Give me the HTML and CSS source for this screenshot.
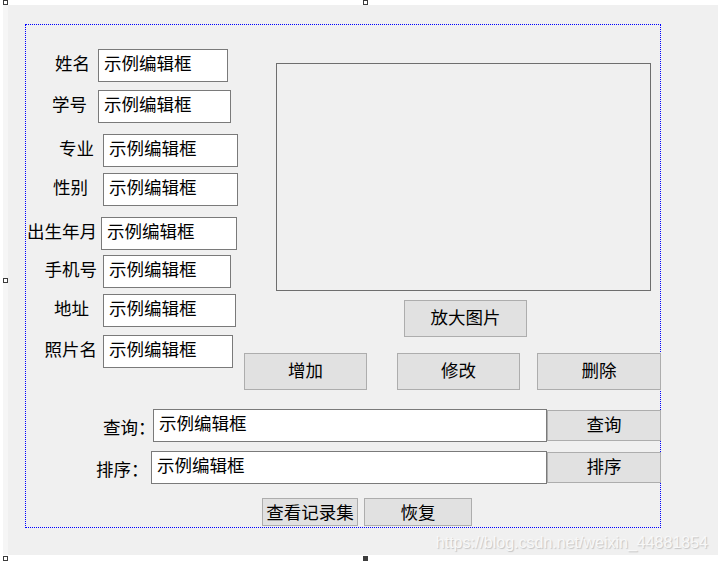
FILE: index.html
```html
<!DOCTYPE html>
<html lang="zh-CN">
<head>
<meta charset="utf-8">
<title>Dialog</title>
<link rel="stylesheet" href="styles.css">
</head>
<body>
<div class="canvas">
  <div class="frame">
    <div class="top">
      <div class="fields">
        <div class="row r1"><span class="lbl">姓名</span><div class="edit">示例编辑框</div></div>
        <div class="row r2"><span class="lbl">学号</span><div class="edit">示例编辑框</div></div>
        <div class="row r3"><span class="lbl">专业</span><div class="edit">示例编辑框</div></div>
        <div class="row r4"><span class="lbl">性别</span><div class="edit">示例编辑框</div></div>
        <div class="row r5"><span class="lbl">出生年月</span><div class="edit">示例编辑框</div></div>
        <div class="row r6"><span class="lbl">手机号</span><div class="edit">示例编辑框</div></div>
        <div class="row r7"><span class="lbl">地址</span><div class="edit">示例编辑框</div></div>
        <div class="row r8"><span class="lbl">照片名</span><div class="edit">示例编辑框</div></div>
      </div>
      <div class="side">
        <div class="picture"></div>
        <button class="btn zoom">放大图片</button>
        <div class="actions">
          <button class="btn act add">增加</button>
          <button class="btn act edit-btn">修改</button>
          <button class="btn act del">删除</button>
        </div>
      </div>
    </div>
    <div class="search s1"><span class="slbl">查询：</span><div class="edit wide">示例编辑框</div><button class="btn sbtn">查询</button></div>
    <div class="search s2"><span class="slbl">排序：</span><div class="edit wide">示例编辑框</div><button class="btn sbtn">排序</button></div>
    <div class="footer">
      <button class="btn rec">查看记录集</button>
      <button class="btn restore">恢复</button>
    </div>
  </div>
  <div class="watermark">https://blog.csdn.net/weixin_44881854</div>
</div>
<span class="handle h-tl"></span>
<span class="handle h-tm"></span>
<span class="handle h-ml"></span>
<span class="handle h-bl"></span>
<span class="handle filled h-bm"></span>
</body>
</html>
```

FILE: styles.css
```css
html, body {
  margin: 0;
  padding: 0;
  background: #ffffff;
}
body {
  position: relative;
  width: 718px;
  height: 561px;
  overflow: hidden;
  font-family: "Noto Sans CJK SC", "Noto Sans", sans-serif;
  font-size: 17.5px;
  color: #000;
}
.canvas {
  box-sizing: border-box;
  margin: 5px 0 0 3px;
  width: 715px;
  height: 550px;
  border-left: 5px solid #f6f6f6;
  background: #f0f0f0;
  padding: 19px 0 0 17px;
}
.frame {
  box-sizing: border-box;
  width: 636px;
  height: 504px;
  border: 1px dotted #0000ff;
}
.top {
  display: flex;
  align-items: flex-start;
}
.fields {
  width: 218px;
  flex-shrink: 0;
  display: flex;
  flex-direction: column;
}
.row {
  display: flex;
  align-items: center;
  height: 33px;
}
.lbl {
  text-align: right;
  white-space: nowrap;
  line-height: 27px;
  padding-bottom: 6px;
  flex-shrink: 0;
}
.edit {
  box-sizing: border-box;
  height: 33px;
  border: 1px solid #7a7a7a;
  background: #fff;
  padding: 0 0 6px 5px;
  display: flex;
  align-items: center;
  white-space: nowrap;
  overflow: hidden;
  flex-shrink: 0;
}
.r1 { margin-top: 24px; }
.r1 .lbl { width: 64px; }
.r1 .edit { margin-left: 8px; width: 130px; }
.r2 { margin-top: 8px; }
.r2 .lbl { width: 61px; }
.r2 .edit { margin-left: 11px; width: 133px; }
.r3 { margin-top: 11px; }
.r3 .lbl { width: 68px; }
.r3 .edit { margin-left: 9px; width: 135px; }
.r4 { margin-top: 6px; }
.r4 .lbl { width: 62px; }
.r4 .edit { margin-left: 15px; width: 135px; }
.r5 { margin-top: 11px; }
.r5 .lbl { width: 71px; }
.r5 .edit { margin-left: 4px; width: 136px; }
.r6 { margin-top: 5px; }
.r6 .lbl { width: 71px; }
.r6 .edit { margin-left: 6px; width: 128px; }
.r7 { margin-top: 6px; }
.r7 .lbl { width: 63px; }
.r7 .edit { margin-left: 14px; width: 133px; }
.r8 { margin-top: 8px; }
.r8 .lbl { width: 71px; }
.r8 .edit { margin-left: 6px; width: 130px; }

.side {
  flex: 1;
  min-width: 0;
  display: flex;
  flex-direction: column;
  align-items: flex-start;
}
.picture {
  box-sizing: border-box;
  margin: 38px 0 0 32px;
  width: 375px;
  height: 228px;
  border: 1px solid #6e6e6e;
}
.btn {
  box-sizing: border-box;
  margin: 0;
  padding: 0 0 3px 0;
  border: 1px solid #adadad;
  background: #e1e1e1;
  font-family: "Noto Sans CJK SC", "Noto Sans", sans-serif;
  font-size: 17.5px;
  color: #000;
  white-space: nowrap;
  text-align: center;
  line-height: 1;
  flex-shrink: 0;
}
.zoom {
  margin: 9px 0 0 160px;
  width: 123px;
  height: 37px;
}
.actions {
  display: flex;
  margin-top: 16px;
}
.act {
  width: 123px;
  height: 37px;
}
.edit-btn { margin-left: 30px; }
.del { margin: 0 -1px 0 17px; width: 124px; }

.search {
  display: flex;
  align-items: center;
  height: 33px;
}
.s1 { margin-top: 19px; }
.s2 { margin-top: 9px; }
.slbl {
  white-space: nowrap;
  line-height: 33px;
  padding-top: 2px;
  flex-shrink: 0;
}
.s1 .slbl { margin-left: 77px; width: 50px; }
.s2 .slbl { margin-left: 70px; width: 55px; }
.s1 .wide { width: 394px; }
.s2 .wide { width: 396px; }
.sbtn {
  width: 114px;
  height: 31px;
  margin-right: -1px;
}
.footer {
  display: flex;
  margin: 14px 0 0 236px;
}
.rec {
  width: 96px;
  height: 28px;
  padding: 0;
}
.restore {
  margin-left: 6px;
  width: 108px;
  height: 28px;
  padding: 0;
}
.watermark {
  margin-top: 6px;
  padding-right: 10px;
  text-align: right;
  font-family: "Liberation Sans", Arial, sans-serif;
  font-size: 16px;
  line-height: 18px;
  color: #f8f8f8;
  text-shadow: 1px 1px 1px #c4c4c4;
  white-space: nowrap;
}
.handle {
  position: absolute;
  box-sizing: border-box;
  width: 5px;
  height: 5px;
  border: 1px solid #3c3c3c;
  background: #fff;
}
.handle.filled { background: #3c3c3c; }
.h-tl { left: 3px; top: 0; }
.h-tm { left: 363px; top: 0; }
.h-ml { left: 3px; top: 278px; }
.h-bl { left: 3px; top: 556px; }
.h-bm { left: 363px; top: 556px; }
```
